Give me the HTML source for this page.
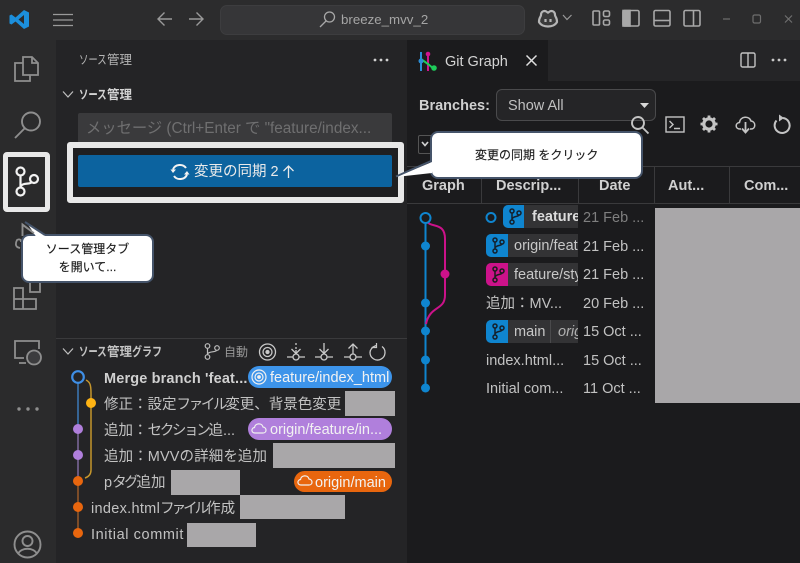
<!DOCTYPE html>
<html><head><meta charset="utf-8">
<style>
html,body{margin:0;padding:0;background:#2b2b2c;}
#r{position:relative;width:800px;height:563px;overflow:hidden;background:#2b2b2c;font-family:"Liberation Sans","Noto Sans CJK JP",sans-serif;color:#c4c4c4;filter:blur(.3px);}
#r div{position:absolute;white-space:nowrap;}
.t{font-size:14.5px;line-height:20px;color:#c2c2c2;}
.g{background:#a9a7a9;}
.h{font-size:14.5px;font-weight:bold;color:#d0d0d0;line-height:20px;}
.s{display:inline-block;font-style:normal;transform-origin:left center;white-space:nowrap;}
.k{letter-spacing:-2.300px;}
.c{font-size:12px;line-height:18px;color:#1c1c1c;-webkit-text-stroke:.15px #1c1c1c;}
svg{position:absolute;overflow:visible;}
</style></head><body><div id="r">
<div style="left:0;top:0;width:800px;height:40px;background:#2c2c2d"></div>
<div style="left:56px;top:40px;width:351px;height:523px;background:#242426"></div>
<div style="left:407px;top:40px;width:393px;height:523px;background:#1b1b1d"></div>
<div style="left:407px;top:40px;width:393px;height:41px;background:#252527"></div>
<div style="left:407px;top:40px;width:141px;height:41px;background:#1b1b1d"></div>
<div style="left:56px;top:338px;width:351px;height:1px;background:#3a3a3c"></div>

<!-- title bar -->
<svg style="left:9px;top:9px" width="21" height="21" viewBox="0 0 21 21"><path d="M15 1 L20 3.500 V17.500 L15 20 L6.500 12.500 L2.500 15.500 L0.500 14.500 V6.500 L2.500 5.500 L6.500 8.500 Z M15 6 L9.500 10.500 L15 15 Z" fill="#1c8fdc" fill-rule="evenodd"/></svg>
<svg style="left:53px;top:13px" width="20" height="14" fill="none" stroke="#9a9a9a" stroke-width="1.300"><path d="M0 1.500H20M0 7H20M0 12.500H20"/></svg>
<svg style="left:157px;top:11px" width="46" height="17" fill="none" stroke="#9a9a9a" stroke-width="1.400"><path d="M1 8H15M7.500 1.500L1 8L7.500 14.500"/><path d="M32 8H46M39.500 1.500L46 8L39.500 14.500"/></svg>
<div style="left:220px;top:5px;width:303px;height:28px;border-radius:7px;background:#363638;border:1px solid #3d3d3f"></div>
<svg style="left:319px;top:11px" width="17" height="17" fill="none" stroke="#a8a8a8" stroke-width="1.300"><circle cx="10.500" cy="6" r="5"/><path d="M7 10L1 16"/></svg>
<div class="t" style="left:341px;top:10px;color:#a5a5a5;font-size:13.300px">breeze_mvv_2</div>
<svg style="left:538px;top:9px" width="36" height="20" fill="none" stroke="#b5b5b5" stroke-width="2.200"><path d="M1 13C1 8 3 8 3 6C3 2 7 1 9 3C10 4 10 4 11 3C13 1 17 2 17 6C17 8 19 8 19 13C16 19 4 19 1 13Z" fill="#3a3a3a"/><path d="M7.500 10V13M12.500 10V13"/><path d="M25 6L29 10.500L33.500 6" stroke-width="1.200" stroke="#999"/></svg>
<svg style="left:592px;top:9px" width="110" height="19" fill="none" stroke="#a8a8a8" stroke-width="1.600"><rect x="1" y="2" width="6.500" height="14" rx="1"/><rect x="11.500" y="2" width="6" height="5.500" rx="1.500"/><rect x="11.500" y="11" width="6" height="5" rx="1.500"/>
<rect x="31" y="1.500" width="16" height="15.500" rx="1.500"/><rect x="31" y="1.500" width="7" height="15.500" fill="#a8a8a8"/>
<rect x="62" y="1.500" width="16" height="15.500" rx="1.500"/><path d="M62 11.500H78"/>
<rect x="92" y="1.500" width="16" height="15.500" rx="1.500"/><path d="M101.500 1.500V17"/></svg>
<svg style="left:722px;top:13px" width="72" height="12" fill="none" stroke="#6e6e6e" stroke-width="1.200"><path d="M1 6H8"/><rect x="31" y="2" width="7.500" height="8" rx="1.500"/><path d="M63 2.500L70 9.500M70 2.500L63 9.500"/></svg>

<!-- activity bar -->
<svg style="left:13px;top:54px" width="27" height="29" fill="none" stroke="#8e8e8e" stroke-width="1.800"><path d="M10 3H19L25 9V21H10Z M19 3V9H25"/><path d="M10 9H2V27H17V21"/></svg>
<svg style="left:13px;top:110px" width="29" height="30" fill="none" stroke="#8e8e8e" stroke-width="1.900"><circle cx="18" cy="11.500" r="9"/><path d="M12 18L2 28"/></svg>
<div style="left:3px;top:152px;width:47px;height:60px;border:5.500px solid #e8e8e8;border-radius:4px;background:#2a2a2b;box-sizing:border-box"></div>
<svg style="left:14px;top:166px" width="25" height="32" fill="none" stroke="#f2f2f2" stroke-width="2.200"><circle cx="6.500" cy="5.500" r="4"/><circle cx="6.500" cy="25.500" r="4"/><circle cx="20" cy="13" r="4"/><path d="M6.500 9.500V21.500M6.500 21C8 16 16 19 18 16"/></svg>
<svg style="left:14px;top:224px" width="30" height="36" fill="none" stroke="#8e8e8e" stroke-width="1.800"><path d="M8.500 12V0.500L21 10"/><path d="M6 24C0 23 2 18 3 16C5 15 7 15 7 18"/></svg>
<svg style="left:12px;top:281px" width="30" height="30" fill="none" stroke="#8e8e8e" stroke-width="1.800"><path d="M2 7H11V28H2ZM2 18H24M11 18H24V28H11M18 1H28V11H18Z"/></svg>
<svg style="left:13px;top:339px" width="30" height="28" fill="none" stroke="#8e8e8e" stroke-width="1.800"><path d="M11 19H2V2H26V10M6 24H13"/><circle cx="21" cy="18.500" r="7" fill="#3c3c3e"/></svg>
<svg style="left:16px;top:405px" width="24" height="8" fill="#8e8e8e"><circle cx="3" cy="4" r="1.700"/><circle cx="12" cy="4" r="1.700"/><circle cx="21" cy="4" r="1.700"/></svg>
<svg style="left:13px;top:530px" width="29" height="29" fill="none" stroke="#8e8e8e" stroke-width="1.900"><circle cx="14.500" cy="14.500" r="13"/><circle cx="14.500" cy="11" r="5"/><path d="M5 24C8 17 21 17 24 24"/></svg>

<!-- source control top -->
<div class="t" style="left:79px;top:50px;font-size:12.500px;color:#b5b5b5"><i class="s" style="width:28px;transform:scaleX(.75)">ソース</i>管理</div>
<svg style="left:373px;top:57px" width="16" height="6" fill="#d0d0d0"><circle cx="2" cy="3" r="1.400"/><circle cx="8" cy="3" r="1.400"/><circle cx="14" cy="3" r="1.400"/></svg>
<svg style="left:62px;top:90px" width="13" height="9" fill="none" stroke="#c0c0c0" stroke-width="1.200"><path d="M1 1.500L6 7L11 1.500"/></svg>
<div class="t" style="left:79px;top:85px;font-size:12.500px;font-weight:bold;color:#d4d4d4"><i class="s" style="width:28px;transform:scaleX(.75)">ソース</i>管理</div>
<div style="left:78px;top:113px;width:314px;height:30px;background:#3a3a3c;border-radius:2px"></div>
<div class="t" style="left:86px;top:119px;color:#6f6f70;font-size:15.300px">メッセージ (Ctrl+Enter で "feature/index...</div>
<div style="left:67px;top:142px;width:337px;height:61px;border:6px solid #e8e8e8;box-sizing:border-box;background:#1f1f21;border-radius:3px"></div>
<div style="left:78px;top:155px;width:314px;height:32px;background:#0c639f;border-radius:2px"></div>
<svg style="left:170px;top:162px" width="20" height="20" fill="none" stroke="#f2f2f2" stroke-width="2"><path d="M3 7.500C5 2 13 1.500 16 6M17 12.500C15 18 7 18.500 4 14"/><path d="M0.500 7.500H6L3 11ZM19.500 12.500H14L17 9Z" fill="#f2f2f2" stroke="none"/></svg>
<div class="t" style="left:194px;top:162px;color:#eaeaea;font-size:14.500px">変更の同期 2</div>
<svg style="left:282px;top:165px" width="13" height="13" fill="none" stroke="#eaeaea" stroke-width="1.300"><path d="M6.500 13V1M1.500 6L6.500 1L11.500 6"/></svg>

<!-- source control graph header -->
<svg style="left:62px;top:347px" width="13" height="9" fill="none" stroke="#c0c0c0" stroke-width="1.200"><path d="M1 1.500L6 7L11 1.500"/></svg>
<div class="t" style="left:79px;top:342px;font-size:12.500px;font-weight:bold;color:#c4c4c4"><i class="s" style="width:28px;transform:scaleX(.75)">ソース</i><i class="s" style="width:25px">管理</i><i class="s" style="width:30px;transform:scaleX(.8)">グラフ</i></div>
<svg style="left:204px;top:343px" width="17" height="17" fill="none" stroke="#bdbdbd" stroke-width="1.200"><circle cx="3.500" cy="3" r="2.300"/><circle cx="3.500" cy="14" r="2.300"/><circle cx="13" cy="5" r="2.300"/><path d="M3.500 5.500V11.500M3.500 11C5 8 11 9.500 12.500 7.500"/></svg>
<div class="t" style="left:224px;top:342px;font-size:12px;color:#989898">自動</div>
<svg style="left:258px;top:342px" width="135" height="20" fill="none" stroke="#c9c9c9" stroke-width="1.300"><circle cx="9.500" cy="10" r="8"/><circle cx="9.500" cy="10" r="4.500"/><circle cx="9.500" cy="10" r="1.500" fill="#c9c9c9"/>
<circle cx="38" cy="15" r="3"/><path d="M29 15H35M41 15H47M38 1V3M38 5V7M38 8V11M33.500 7L38 11.500L42.500 7"/>
<circle cx="66" cy="15" r="3"/><path d="M57 15H63M69 15H75M66 1V11.500M61.500 7L66 11.500L70.500 7"/>
<circle cx="95" cy="15" r="3"/><path d="M86 15H92M98 15H104M95 11.500V2M90.500 6.500L95 2L99.500 6.500"/>
<path d="M118 3.500C114 5 112 8 112 10.500A7.500 7.500 0 1 0 124 4.500"/><path d="M118.500 1V5.500H113.500" stroke-width="1.200"/></svg>

<!-- scm graph -->
<svg style="left:60px;top:365px" width="50" height="180" fill="none"><path d="M18 13V64" stroke="#3c7ab8" stroke-width="1.500"/><path d="M18 64V116" stroke="#7e6a9e" stroke-width="1.500"/><path d="M18 116V168" stroke="#9a5a28" stroke-width="1.500"/><path d="M26 15C30 17 31 20 31 28V105C31 110 28 112 25 113" stroke="#c4952c" stroke-width="1.500"/>
<circle cx="18" cy="12" r="5.800" stroke="#3f8fe6" stroke-width="2.200" fill="#242426"/><circle cx="31" cy="38" r="5" fill="#ffb414"/><circle cx="18" cy="64" r="5" fill="#b07fdc"/><circle cx="18" cy="90" r="5" fill="#b07fdc"/><circle cx="18" cy="116" r="5" fill="#e8660e"/><circle cx="18" cy="142" r="5" fill="#e8660e"/><circle cx="18" cy="168" r="5" fill="#e8660e"/></svg>
<div class="t" style="left:104px;top:369px;font-weight:bold;color:#d0d0d0;letter-spacing:.15px">Merge branch 'feat...</div>
<div class="t" style="left:104px;top:395px">修正：設定<span class="k">ファイル</span>変更、背景色変更</div>
<div class="t" style="left:104px;top:421px">追加：<span class="k">セクション</span>追...</div>
<div class="t" style="left:104px;top:447px;letter-spacing:.1px">追加：MVVの詳細を追加</div>
<div class="t" style="left:104px;top:473px">p<span class="k">タグ</span>追加</div>
<div class="t" style="left:91px;top:499px"><span style="letter-spacing:.3px">index.html</span><span class="k" style="letter-spacing:-3px">ファイル</span>作成</div>
<div class="t" style="left:91px;top:525px;letter-spacing:.6px">Initial commit</div>
<div class="g" style="left:345px;top:391px;width:50px;height:25px"></div>
<div class="g" style="left:273px;top:443px;width:122px;height:25px"></div>
<div class="g" style="left:171px;top:470px;width:69px;height:25px"></div>
<div class="g" style="left:240px;top:495px;width:105px;height:24px"></div>
<div class="g" style="left:187px;top:523px;width:69px;height:24px"></div>
<div style="left:248px;top:366px;width:144px;height:22px;border-radius:11px;background:#3d94ea"></div>
<svg style="left:251px;top:369px" width="16" height="16" fill="none" stroke="#f0f0f0" stroke-width="1.200"><circle cx="8" cy="8" r="7"/><circle cx="8" cy="8" r="4"/><circle cx="8" cy="8" r="1.300" fill="#f0f0f0"/></svg>
<div class="t" style="left:270px;top:368px;color:#f2f2f2">feature/index_html</div>
<div style="left:248px;top:418px;width:144px;height:22px;border-radius:11px;background:#b07fdc"></div>
<svg style="left:251px;top:421px" width="16" height="14" fill="none" stroke="#f0f0f0" stroke-width="1.200"><path d="M4 12C0 12 0 7 3.500 6.500C4 2 11 1.500 12 6C16 6.500 16 12 12 12Z"/></svg>
<div class="t" style="left:270px;top:420px;color:#f2f2f2">origin/feature/in...</div>
<div style="left:294px;top:471px;width:98px;height:21px;border-radius:11px;background:#e8660e"></div>
<svg style="left:297px;top:473px" width="16" height="14" fill="none" stroke="#f0f0f0" stroke-width="1.200"><path d="M4 12C0 12 0 7 3.500 6.500C4 2 11 1.500 12 6C16 6.500 16 12 12 12Z"/></svg>
<div class="t" style="left:315px;top:473px;color:#f2f2f2">origin/main</div>

<!-- git graph tab -->
<svg style="left:418px;top:50px" width="20" height="23" fill="none" stroke-width="2"><path d="M3 2V21" stroke="#2a8fd8"/><path d="M10 2V21" stroke="#d0148f"/><path d="M3 9L10 14L16 19" stroke="#1ecb5a" /><circle cx="10" cy="4" r="2.300" fill="#d0148f" stroke="none"/><circle cx="3" cy="11" r="2.500" fill="#2a8fd8" stroke="none"/><circle cx="16" cy="18" r="2.800" fill="#1ecb5a" stroke="none"/></svg>
<div class="t" style="left:445px;top:52px;color:#d4d4d4;font-size:14.500px">Git Graph</div>
<svg style="left:526px;top:55px" width="11" height="11" fill="none" stroke="#e0e0e0" stroke-width="1.500"><path d="M0.500 0.500L10.500 10.500M10.500 0.500L0.500 10.500"/></svg>
<svg style="left:740px;top:52px" width="16" height="16" fill="none" stroke="#c2c2c2" stroke-width="1.400"><rect x="1" y="1" width="14" height="14" rx="1.500"/><path d="M8 1V15"/></svg>
<svg style="left:771px;top:57px" width="16" height="6" fill="#c8c8c8"><circle cx="2" cy="3" r="1.400"/><circle cx="8" cy="3" r="1.400"/><circle cx="14" cy="3" r="1.400"/></svg>

<div class="h" style="left:419px;top:96px;font-size:14.500px;color:#d0d0d0">Branches:</div>
<div style="left:496px;top:89px;width:158px;height:30px;border:1px solid #4a4a4c;border-radius:6px;background:#252527"></div>
<div class="t" style="left:508px;top:96px;color:#c0c0c0;font-size:14.500px">Show All</div>
<svg style="left:640px;top:103px" width="9" height="5"><path d="M0 0H9L4.500 5Z" fill="#d8d8d8"/></svg>
<svg style="left:630px;top:115px" width="20" height="20" fill="none" stroke="#c4c4c4" stroke-width="1.900"><circle cx="8" cy="8" r="6"/><path d="M12.500 12.500L18.500 18.500"/></svg>
<svg style="left:665px;top:116px" width="20" height="17" fill="none" stroke="#c4c4c4" stroke-width="1.400"><rect x="1" y="1" width="18" height="15"/><path d="M4.500 5L8 8.500L4.500 12M9 12.500H15"/></svg>
<svg style="left:700px;top:115px" width="18" height="18" viewBox="0 0 18 18"><circle cx="9" cy="9" r="5.200" fill="none" stroke="#c4c4c4" stroke-width="3.200"/><path d="M9 0.500V3.500M9 14.500V17.500M0.500 9H3.500M14.500 9H17.500M3 3L5 5M13 13L15 15M15 3L13 5M5 13L3 15" stroke="#c4c4c4" stroke-width="2.800"/></svg>
<svg style="left:735px;top:115px" width="21" height="19" fill="none" stroke="#c4c4c4" stroke-width="1.500"><path d="M6 14H5C0 14 0 8 4.500 7.500C5 1 14.500 0.500 16 6C21 6.500 21 14 16 14H15"/><path d="M10.500 7V17M7 13.500L10.500 17.500L14 13.500" stroke-width="1.800"/></svg>
<svg style="left:773px;top:114px" width="18" height="20" fill="none" stroke="#c4c4c4" stroke-width="2"><path d="M10 4A7.500 7.500 0 1 1 3.500 6.500"/><path d="M6 0.500L11 4L6 7.500Z" fill="#c4c4c4" stroke="none"/></svg>
<div style="left:418px;top:135px;width:14px;height:17px;border:1px solid #555;border-radius:2px"></div>
<svg style="left:421px;top:141px" width="8" height="6" fill="none" stroke="#d0d0d0" stroke-width="1.700"><path d="M1 1L4 4.500L7 1"/></svg>

<!-- table header -->
<div style="left:407px;top:166px;width:393px;height:1px;background:#3a3a3c"></div>
<div style="left:407px;top:203px;width:393px;height:1px;background:#3a3a3c"></div>
<div style="left:481px;top:167px;width:1px;height:36px;background:#3a3a3c"></div>
<div style="left:578px;top:167px;width:1px;height:36px;background:#3a3a3c"></div>
<div style="left:654px;top:167px;width:1px;height:36px;background:#3a3a3c"></div>
<div style="left:729px;top:167px;width:1px;height:36px;background:#3a3a3c"></div>
<div class="h" style="left:422px;top:176px">Graph</div>
<div class="h" style="left:496px;top:176px">Descrip...</div>
<div class="h" style="left:599px;top:176px">Date</div>
<div class="h" style="left:668px;top:176px">Aut...</div>
<div class="h" style="left:744px;top:176px">Com...</div>

<!-- git graph -->
<svg style="left:407px;top:205px" width="60" height="195" fill="none"><path d="M18.500 13V184" stroke="#0f85cf" stroke-width="2"/><path d="M19 15C23 24 38 16 38 34V90C38 106 23 100 19 119" stroke="#cc128a" stroke-width="2"/><circle cx="18.500" cy="13" r="5" stroke="#0f85cf" stroke-width="2" fill="#1b1b1d"/><circle cx="18.500" cy="41" r="4.500" fill="#0f85cf"/><circle cx="38" cy="69" r="4.500" fill="#cc128a"/><circle cx="18.500" cy="98" r="4.500" fill="#0f85cf"/><circle cx="18.500" cy="126" r="4.500" fill="#0f85cf"/><circle cx="18.500" cy="155" r="4.500" fill="#0f85cf"/><circle cx="18.500" cy="183" r="4.500" fill="#0f85cf"/></svg>
<svg style="left:486px;top:211px" width="12" height="12" fill="none"><circle cx="5" cy="6.500" r="4.500" stroke="#0f85cf" stroke-width="2"/></svg>

<div style="left:503px;top:205px;width:75px;height:23px;background:#333335;border-radius:5px 0 0 5px;overflow:hidden"><div style="left:0;top:0;width:21px;height:23px;background:#0f85cf"></div><div style="left:29px;top:2px;font-size:14.500px;font-weight:bold;line-height:20px;color:#dcdcdc">feature/index</div></div>
<div style="left:486px;top:234px;width:92px;height:23px;background:#333335;border-radius:5px 0 0 5px;overflow:hidden"><div style="left:0;top:0;width:22px;height:23px;background:#0f85cf"></div><div style="left:28px;top:2px;font-size:14.500px;line-height:20px;color:#c8c8c8">origin/feature</div></div>
<div style="left:486px;top:263px;width:92px;height:23px;background:#333335;border-radius:5px 0 0 5px;overflow:hidden"><div style="left:0;top:0;width:22px;height:23px;background:#cc128a"></div><div style="left:28px;top:2px;font-size:14.500px;line-height:20px;color:#c8c8c8">feature/style</div></div>
<div style="left:486px;top:320px;width:92px;height:23px;background:#333335;border-radius:5px 0 0 5px;overflow:hidden"><div style="left:0;top:0;width:22px;height:23px;background:#0f85cf"></div><div style="left:28px;top:2px;font-size:14.500px;line-height:20px;color:#c8c8c8">main</div><div style="left:64px;top:0;width:1px;height:23px;background:#4a4a4c"></div><div style="left:72px;top:2px;font-size:14.500px;font-style:italic;line-height:20px;color:#b0b0b0">origin</div></div>
<svg style="left:508px;top:208px" width="17" height="17" fill="none" stroke="#14202c" stroke-width="1.500"><circle cx="4" cy="3" r="2"/><circle cx="4" cy="14" r="2"/><circle cx="11" cy="5" r="2"/><path d="M4 5V12M4 11C5 8 10 9 11 7"/></svg>
<svg style="left:491px;top:237px" width="17" height="17" fill="none" stroke="#14202c" stroke-width="1.500"><circle cx="4" cy="3" r="2"/><circle cx="4" cy="14" r="2"/><circle cx="11" cy="5" r="2"/><path d="M4 5V12M4 11C5 8 10 9 11 7"/></svg>
<svg style="left:491px;top:266px" width="17" height="17" fill="none" stroke="#1b1b1d" stroke-width="1.500"><circle cx="4" cy="3" r="2"/><circle cx="4" cy="14" r="2"/><circle cx="11" cy="5" r="2"/><path d="M4 5V12M4 11C5 8 10 9 11 7"/></svg>
<svg style="left:491px;top:323px" width="17" height="17" fill="none" stroke="#14202c" stroke-width="1.500"><circle cx="4" cy="3" r="2"/><circle cx="4" cy="14" r="2"/><circle cx="11" cy="5" r="2"/><path d="M4 5V12M4 11C5 8 10 9 11 7"/></svg>
<div class="t" style="left:486px;top:294px">追加：MV...</div>
<div class="t" style="left:486px;top:351px">index.html...</div>
<div class="t" style="left:486px;top:379px">Initial com...</div>
<div class="t" style="left:583px;top:208px;color:#7f7f7f">21 Feb ...</div>
<div class="t" style="left:583px;top:237px">21 Feb ...</div>
<div class="t" style="left:583px;top:265px">21 Feb ...</div>
<div class="t" style="left:583px;top:294px">20 Feb ...</div>
<div class="t" style="left:583px;top:322px">15 Oct ...</div>
<div class="t" style="left:583px;top:351px">15 Oct ...</div>
<div class="t" style="left:583px;top:379px">11 Oct ...</div>
<div class="g" style="left:655px;top:208px;width:145px;height:195px"></div>

<!-- callouts -->
<div style="left:430px;top:131px;width:213px;height:48px;background:#fff;border:2px solid #45546a;border-radius:8px;box-sizing:border-box"></div>
<div class="c" style="left:475px;top:146px">変更の同期 をクリック</div>
<div style="left:21px;top:234px;width:133px;height:49px;background:#fff;border:2px solid #45546a;border-radius:8px;box-sizing:border-box"></div>
<div class="c" style="left:21px;top:240px;width:133px;text-align:center">ソース管理タブ<br>を開いて...</div>
<svg style="left:0;top:0" width="800" height="563" fill="none">
<path d="M396 177L432 162V173Z" fill="#fff"/>
<path d="M396 176.500L431 161" stroke="#45546a" stroke-width="1.800"/>
<path d="M27 223L46 236.500H36Z" fill="#fff"/>
<path d="M25 222L45 235" stroke="#45546a" stroke-width="2"/>
<path d="M22.500 236V225L34 233" stroke="#8e8e8e" stroke-width="1.600"/>
</svg>
</div></body></html>
